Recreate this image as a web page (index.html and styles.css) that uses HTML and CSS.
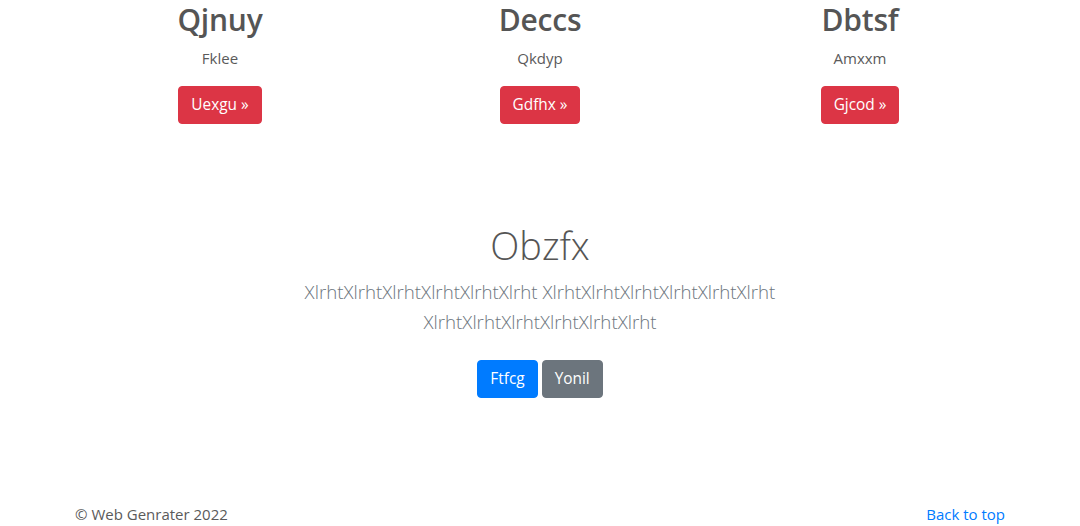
FILE: index.html
```html
<!DOCTYPE html>
<html lang="en">
<head>
<meta charset="utf-8">
<title>Page</title>
<link rel="stylesheet" href="styles.css">
</head>
<body>
<main>
  <div class="container">
    <div class="row">
      <div class="col">
        <h2 class="col-title">Qjnuy</h2>
        <p class="col-text">Fklee</p>
        <a class="btn btn-danger" href="#">Uexgu &raquo;</a>
      </div>
      <div class="col">
        <h2 class="col-title">Deccs</h2>
        <p class="col-text">Qkdyp</p>
        <a class="btn btn-danger" href="#">Gdfhx &raquo;</a>
      </div>
      <div class="col">
        <h2 class="col-title">Dbtsf</h2>
        <p class="col-text">Amxxm</p>
        <a class="btn btn-danger" href="#">Gjcod &raquo;</a>
      </div>
    </div>
  </div>

  <section class="hero">
    <h1 class="hero-title">Obzfx</h1>
    <p class="lead">XlrhtXlrhtXlrhtXlrhtXlrhtXlrht XlrhtXlrhtXlrhtXlrhtXlrhtXlrht XlrhtXlrhtXlrhtXlrhtXlrhtXlrht</p>
    <div class="hero-actions">
      <a class="btn btn-primary" href="#">Ftfcg</a>
      <a class="btn btn-secondary" href="#">Yonil</a>
    </div>
  </section>
</main>
<footer class="footer">
  <div class="footer-inner">
    <p class="copy">&copy; Web Genrater 2022</p>
    <a class="top-link" href="#">Back to top</a>
  </div>
</footer>
</body>
</html>
```
FILE: styles.css
```css
* { box-sizing: border-box; }
body {
  margin: 0;
  font-family: "Open Sans", "Noto Sans", sans-serif;
  font-size: 16px;
  line-height: 1.5;
  color: #5a5a5a;
  background: #fff;
}
.container {
  width: 960px;
  margin: 0 auto;
  padding: 0 15px;
}
.row {
  display: flex;
  margin: 0 -15px;
}
.col {
  flex: 1 1 0;
  padding: 0 15px;
  text-align: center;
}
.col-title {
  margin: 0 0 8px;
  padding-top: 1px;
  font-size: 30px;
  line-height: 38px;
  font-weight: 600;
  letter-spacing: -0.2px;
  color: #555;
}
.col-text {
  margin: 0 0 16px;
  font-size: 15px;
  color: #5a5a5a;
}
.btn {
  display: inline-block;
  margin: 8px 0;
  padding: 6px 12px;
  font-size: 15.4px;
  line-height: 24px;
  border: 1px solid transparent;
  border-radius: 4px;
  color: #fff;
  text-decoration: none;
}
.col .btn { margin: 0; }
.btn-danger { background: #dc3545; border-color: #dc3545; }
.btn-primary { background: #007bff; border-color: #007bff; }
.btn-secondary { background: #6c757d; border-color: #6c757d; }
.hero {
  max-width: 640px;
  margin: 97px auto 0;
  text-align: center;
}
.hero-title {
  margin: 0 0 8px;
  font-size: 38px;
  line-height: 48px;
  font-weight: 300;
  color: #555;
}
.lead {
  margin: 0 0 15px;
  font-size: 18.7px;
  line-height: 30px;
  font-weight: 300;
  color: #6c757d;
}
.hero-actions {
  font-size: 0;
}
.hero-actions .btn + .btn { margin-left: 4px; }
.footer {
  margin-top: 97px;
}
.footer-inner {
  width: 960px;
  margin: 0 auto;
  padding: 0 15px;
  display: flex;
  justify-content: space-between;
}
.copy { margin: 0; font-size: 15px; }
.top-link { color: #007bff; text-decoration: none; font-size: 15px; }
```
